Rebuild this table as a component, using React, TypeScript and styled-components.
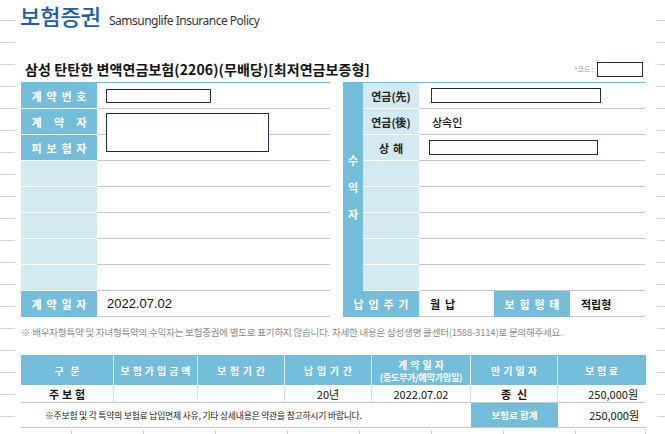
import React from "react";
import styled, { createGlobalStyle } from "styled-components";

const BLUE = "#74bedb";
const LIGHT = "#d4eaf3";
const LINE = "#c8c8c8";
const NAVY = "#1d2b4f";
const CYAN = "#55c4ec";

const Spread = ({ text, width }: { text: string; width: number }) => (
    <SpreadBox $width={width}>
        {Array.from(text).map((c, i) => (
            <span key={i}>{c}</span>
        ))}
    </SpreadBox>
);

const App = () => {
    return (
        <>
            <GlobalStyle />
            <Page>
                <Margin $side="left" />
                <Content>
                    <TitleBar>
                        <Title>보험증권</Title>
                        <SubTitle>Samsunglife Insurance Policy</SubTitle>
                    </TitleBar>

                    <HeadingRow>
                        <Heading>삼성 탄탄한 변액연금보험(2206)(무배당)[최저연금보증형]</Heading>
                        <CodeGroup>
                            <CodeLabel>*코드 :</CodeLabel>
                            <InputBox $w={46} $h={15} />
                        </CodeGroup>
                    </HeadingRow>

                    <Tables>
                        <LeftTable>
                            <LabelCell $tone="dark">
                                <Spread text="계약번호" width={55} />
                            </LabelCell>
                            <ValueCell>
                                <InputBox $w={105} $h={14} $ml={-1} />
                            </ValueCell>

                            <LabelCell $tone="dark">
                                <Spread text="계약자" width={55} />
                            </LabelCell>
                            <ValueCell>
                                <OverlayBox />
                            </ValueCell>

                            <LabelCell $tone="dark">
                                <Spread text="피보험자" width={55} />
                            </LabelCell>
                            <ValueCell />

                            {[0, 1, 2, 3, 4].map((i) => (
                                <React.Fragment key={i}>
                                    <LabelCell $tone="light" />
                                    <ValueCell />
                                </React.Fragment>
                            ))}

                            <LabelCell $tone="dark" $last>
                                <Spread text="계약일자" width={55} />
                            </LabelCell>
                            <ValueCell>2022.07.02</ValueCell>
                        </LeftTable>

                        <RightTable>
                            <VerticalHead>
                                <span>수</span>
                                <span>익</span>
                                <span>자</span>
                            </VerticalHead>

                            <SubLabel>연금(先)</SubLabel>
                            <WideValue>
                                <InputBox $w={170} $h={15} $ml={12} />
                            </WideValue>

                            <SubLabel>연금(後)</SubLabel>
                            <WideValue $pl={13}>상속인</WideValue>

                            <SubLabel>
                                <Spread text="상해" width={24} />
                            </SubLabel>
                            <WideValue>
                                <InputBox $w={169} $h={15} $ml={10} />
                            </WideValue>

                            {[0, 1, 2, 3, 4].map((i) => (
                                <React.Fragment key={i}>
                                    <SubLabel />
                                    <WideValue />
                                </React.Fragment>
                            ))}

                            <FooterLabel $span={2}>
                                <Spread text="납입주기" width={55} />
                            </FooterLabel>
                            <FooterValue>월&nbsp;&nbsp;납</FooterValue>
                            <FooterLabel $span={1}>
                                <Spread text="보험형태" width={55} />
                            </FooterLabel>
                            <FooterValue>적립형</FooterValue>
                        </RightTable>
                    </Tables>

                    <Notice>
                        ※ 배우자형특약 및 자녀형특약의 수익자는 보험증권에 별도로 표기하지 않습니다. 자세한 내용은
                        삼성생명 콜센터(1588-3114)로 문의해주세요.
                    </Notice>

                    <SummaryTable>
                        <HeadCell>
                            <Spread text="구분" width={25} />
                        </HeadCell>
                        <HeadCell>
                            <Spread text="보험가입금액" width={70} />
                        </HeadCell>
                        <HeadCell>
                            <Spread text="보험기간" width={48} />
                        </HeadCell>
                        <HeadCell>
                            <Spread text="납입기간" width={48} />
                        </HeadCell>
                        <HeadCell>
                            <Spread text="계약일자" width={46} />
                            <HeadSmall>(중도부가/예약가입일)</HeadSmall>
                        </HeadCell>
                        <HeadCell>
                            <Spread text="만기일자" width={46} />
                        </HeadCell>
                        <HeadCell $last>
                            <Spread text="보험료" width={33} />
                        </HeadCell>

                        <DataCell $bold>
                            <Spread text="주보험" width={36} />
                        </DataCell>
                        <DataCell />
                        <DataCell />
                        <DataCell>20년</DataCell>
                        <DataCell>2022.07.02</DataCell>
                        <DataCell $bold>
                            <Spread text="종신" width={26} />
                        </DataCell>
                        <DataCell $align="right" $last>
                            250,000원
                        </DataCell>

                        <NoteCell>※주보험 및 각 특약의 보험료 납입면제 사유, 기타 상세내용은 약관을 참고하시기 바랍니다.</NoteCell>
                        <TotalLabel>보험료 합계</TotalLabel>
                        <TotalValue>250,000원</TotalValue>
                    </SummaryTable>

                    <NextTable>
                        {Array.from({ length: 9 }).map((_, i) => (
                            <NextCell key={i} />
                        ))}
                    </NextTable>
                </Content>
                <Margin $side="right" />
            </Page>
        </>
    );
};

const GlobalStyle = createGlobalStyle`
    html, body {
        margin: 0;
        padding: 0;
        background: #fff;
    }
    body {
        font-family: "Noto Sans CJK KR", "Noto Sans", sans-serif;
        color: #222;
    }
`;

const Page = styled.div`
    display: grid;
    grid-template-columns: 21px 625px 19px;
    width: 665px;
    height: 434px;
    overflow: hidden;
`;

const Margin = styled.div<{ $side: "left" | "right" }>`
    background-image: repeating-linear-gradient(
        to bottom,
        transparent 0 20px,
        #d2d2d2 20px 21px,
        transparent 21px 22px
    );
    background-repeat: no-repeat;
    background-size: ${(p) => (p.$side === "left" ? "15px 100%" : "8px 100%")};
    background-position: ${(p) => (p.$side === "left" ? "left top" : "right top")};
`;

const Content = styled.div`
    display: flex;
    flex-direction: column;
    min-width: 0;
`;

const TitleBar = styled.div`
    display: flex;
    align-items: baseline;
    gap: 8px;
    height: 34px;
    box-sizing: border-box;
`;

const Title = styled.div`
    font-size: 22px;
    font-weight: 500;
    line-height: 30px;
    color: #1f5ba6;
    margin-left: -1px;
`;

const SubTitle = styled.div`
    font-family: "Noto Sans", sans-serif;
    font-size: 12px;
    color: #333;
    letter-spacing: -0.5px;
`;

const HeadingRow = styled.div`
    display: flex;
    align-items: center;
    justify-content: space-between;
    height: 26px;
    margin-top: 22px;
    padding: 0 3px 0 4px;
`;

const Heading = styled.div`
    font-size: 14px;
    font-weight: 700;
    color: #111;
    letter-spacing: 0.1px;
`;

const CodeGroup = styled.div`
    display: flex;
    align-items: center;
    gap: 3px;
`;

const CodeLabel = styled.span`
    font-size: 7px;
    color: #9a9a9a;
`;

const InputBox = styled.div<{ $w: number; $h: number; $ml?: number }>`
    width: ${(p) => p.$w}px;
    height: ${(p) => p.$h}px;
    margin-left: ${(p) => p.$ml ?? 0}px;
    border: 1.5px solid ${NAVY};
    box-sizing: border-box;
    background: #fff;
`;

const OverlayBox = styled.div`
    position: absolute;
    top: 4px;
    left: 9px;
    width: 163px;
    height: 39px;
    border: 1.5px solid ${NAVY};
    box-sizing: border-box;
    background: #fff;
    z-index: 1;
`;

const Tables = styled.div`
    display: flex;
    gap: 13px;
`;

const LeftTable = styled.div`
    display: grid;
    grid-template-columns: 76px 233px;
    grid-auto-rows: 26px;
    width: 309px;
    border-top: 1px solid ${CYAN};
`;

const SpreadBox = styled.span<{ $width: number }>`
    display: inline-flex;
    justify-content: space-between;
    width: ${(p) => p.$width}px;
`;

const LabelCell = styled.div<{ $tone: "dark" | "light"; $last?: boolean }>`
    display: flex;
    align-items: center;
    justify-content: center;
    background: ${(p) => (p.$tone === "dark" ? BLUE : LIGHT)};
    border-bottom: 1px solid ${(p) => (p.$last ? BLUE : "#fff")};
    color: #fff;
    font-size: 11px;
    font-weight: 700;
`;

const ValueCell = styled.div`
    position: relative;
    display: flex;
    align-items: center;
    padding-left: 10px;
    border-bottom: 1px solid ${LINE};
    font-family: "Liberation Sans", sans-serif;
    font-size: 13px;
    color: #111;
`;

const RightTable = styled.div`
    display: grid;
    grid-template-columns: 20px 56px 75px 76px 75px;
    grid-auto-rows: 26px;
    width: 302px;
    border-top: 1px solid ${CYAN};
`;

const VerticalHead = styled.div`
    grid-column: 1;
    grid-row: 1 / span 8;
    display: flex;
    flex-direction: column;
    align-items: center;
    justify-content: center;
    background: ${BLUE};
    color: #fff;
    font-size: 11px;
    font-weight: 700;
    line-height: 27px;
`;

const SubLabel = styled.div`
    grid-column: 2;
    display: flex;
    align-items: center;
    justify-content: center;
    background: ${LIGHT};
    border-bottom: 1px solid #fff;
    color: #222;
    font-size: 11px;
    font-weight: 700;
`;

const WideValue = styled.div<{ $pl?: number }>`
    grid-column: 3 / span 3;
    display: flex;
    align-items: center;
    padding-left: ${(p) => p.$pl ?? 0}px;
    border-bottom: 1px solid ${LINE};
    font-size: 11px;
    font-weight: 500;
    color: #111;
`;

const FooterLabel = styled.div<{ $span: number }>`
    grid-column: span ${(p) => p.$span};
    display: flex;
    align-items: center;
    justify-content: center;
    background: ${BLUE};
    color: #fff;
    font-size: 11px;
    font-weight: 700;
`;

const FooterValue = styled.div`
    display: flex;
    align-items: center;
    padding-left: 11px;
    border-bottom: 1px solid ${LINE};
    font-size: 11px;
    font-weight: 700;
    color: #111;
`;

const Notice = styled.div`
    margin-top: 8px;
    font-size: 9.5px;
    line-height: 14px;
    color: #8a8a8a;
    letter-spacing: -0.2px;
    white-space: nowrap;
`;

const SummaryTable = styled.div`
    display: grid;
    grid-template-columns: 93px 84px 87px 87px 99px 87px 88px;
    margin-top: 16px;
`;

const HeadCell = styled.div<{ $last?: boolean }>`
    height: 30px;
    display: flex;
    flex-direction: column;
    align-items: center;
    justify-content: center;
    background: ${BLUE};
    border-right: 1px solid ${(p) => (p.$last ? BLUE : "#e6f2f7")};
    color: #fff;
    font-size: 10px;
    font-weight: 700;
    line-height: normal;
`;

const HeadSmall = styled.span`
    font-size: 9px;
    line-height: normal;
    margin-top: -1px;
    letter-spacing: -0.2px;
`;

const DataCell = styled.div<{ $align?: "right"; $bold?: boolean; $last?: boolean }>`
    height: 17px;
    display: flex;
    align-items: center;
    justify-content: ${(p) => (p.$align === "right" ? "flex-end" : "center")};
    padding-right: ${(p) => (p.$align === "right" ? "7px" : "0")};
    border-right: 1px solid ${(p) => (p.$last ? "transparent" : "#dcdcdc")};
    border-bottom: 1px solid ${LINE};
    font-size: 11px;
    font-weight: ${(p) => (p.$bold ? 700 : 400)};
    color: #111;
`;

const NoteCell = styled.div`
    grid-column: 1 / span 5;
    height: 24px;
    display: flex;
    align-items: center;
    padding-left: 24px;
    border-bottom: 1px solid ${LINE};
    font-size: 8.8px;
    color: #222;
    letter-spacing: -0.2px;
    white-space: nowrap;
`;

const TotalLabel = styled.div`
    display: flex;
    align-items: center;
    justify-content: center;
    background: ${BLUE};
    border-bottom: 1px solid ${LINE};
    color: #fff;
    font-size: 9.5px;
    font-weight: 700;
`;

const TotalValue = styled.div`
    display: flex;
    align-items: center;
    justify-content: flex-end;
    padding-right: 7px;
    border-bottom: 1px solid ${LINE};
    font-size: 11px;
    font-weight: 400;
    color: #111;
`;

const NextTable = styled.div`
    display: grid;
    grid-template-columns: 51px repeat(7, 72px) 70px;
    height: 8px;
    margin-top: 2px;
`;

const NextCell = styled.div`
    border-right: 1px solid #d0d0d0;
`;

export default App;
